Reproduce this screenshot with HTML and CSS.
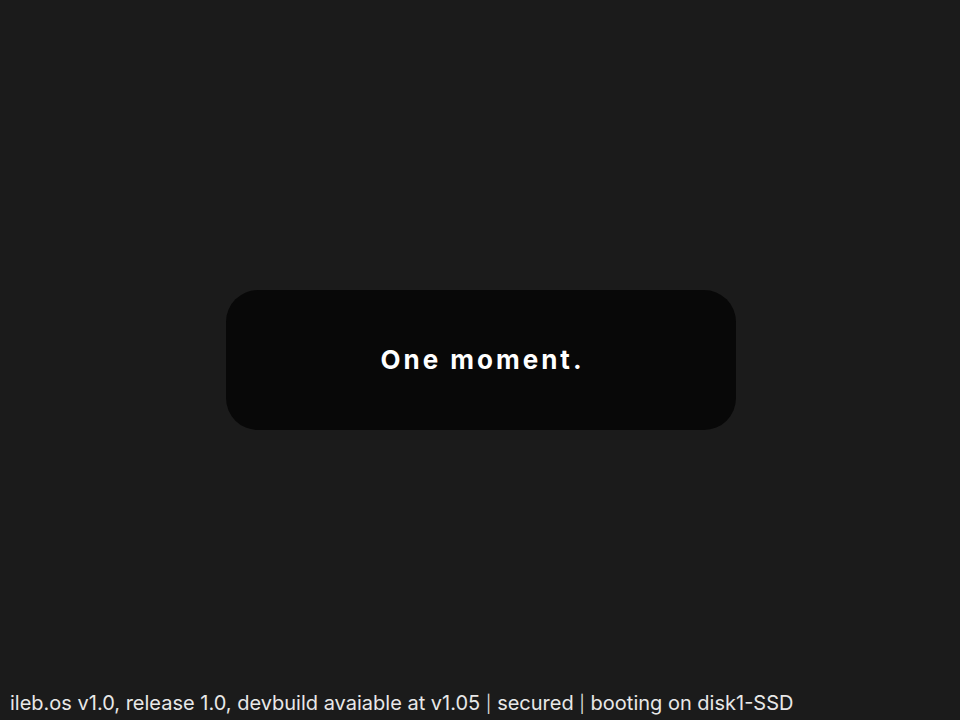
FILE: index.html
```html
<!DOCTYPE html>
<html>
<head>
<meta charset="utf-8">
<link rel="stylesheet" href="styles.css">
</head>
<body>
<main class="screen">
  <div class="center">
    <div class="card"><span class="title">One moment.</span></div>
  </div>
  <footer class="footer">ileb.os v1.0, release 1.0, devbuild avaiable at v1.05 <span class="sep">|</span> secured <span class="sep">|</span> booting on disk1-SSD</footer>
</main>
</body>
</html>
```
FILE: styles.css
```css
html, body {
  margin: 0;
  padding: 0;
  height: 100%;
  background: #1b1b1b;
}
.screen {
  height: 720px;
  display: flex;
  flex-direction: column;
  font-family: Inter, "Noto Sans", sans-serif;
  color: #ffffff;
}
.center {
  flex: 1;
  display: flex;
  align-items: center;
  justify-content: center;
}
.card {
  width: 510px;
  height: 140px;
  background: #080808;
  border-radius: 32px;
  display: flex;
  align-items: center;
  justify-content: center;
  margin: 28px 0 0 2px;
}
.title {
  font-size: 26px;
  font-weight: 700;
  letter-spacing: 3px;
  margin-right: -3px;
}
.footer {
  font-size: 20px;
  color: #e8e8e8;
  padding: 0 0 4px 10px;
  line-height: 24px;
}
.sep {
  font-size: 17px;
  color: #d8d8d8;
}
```
